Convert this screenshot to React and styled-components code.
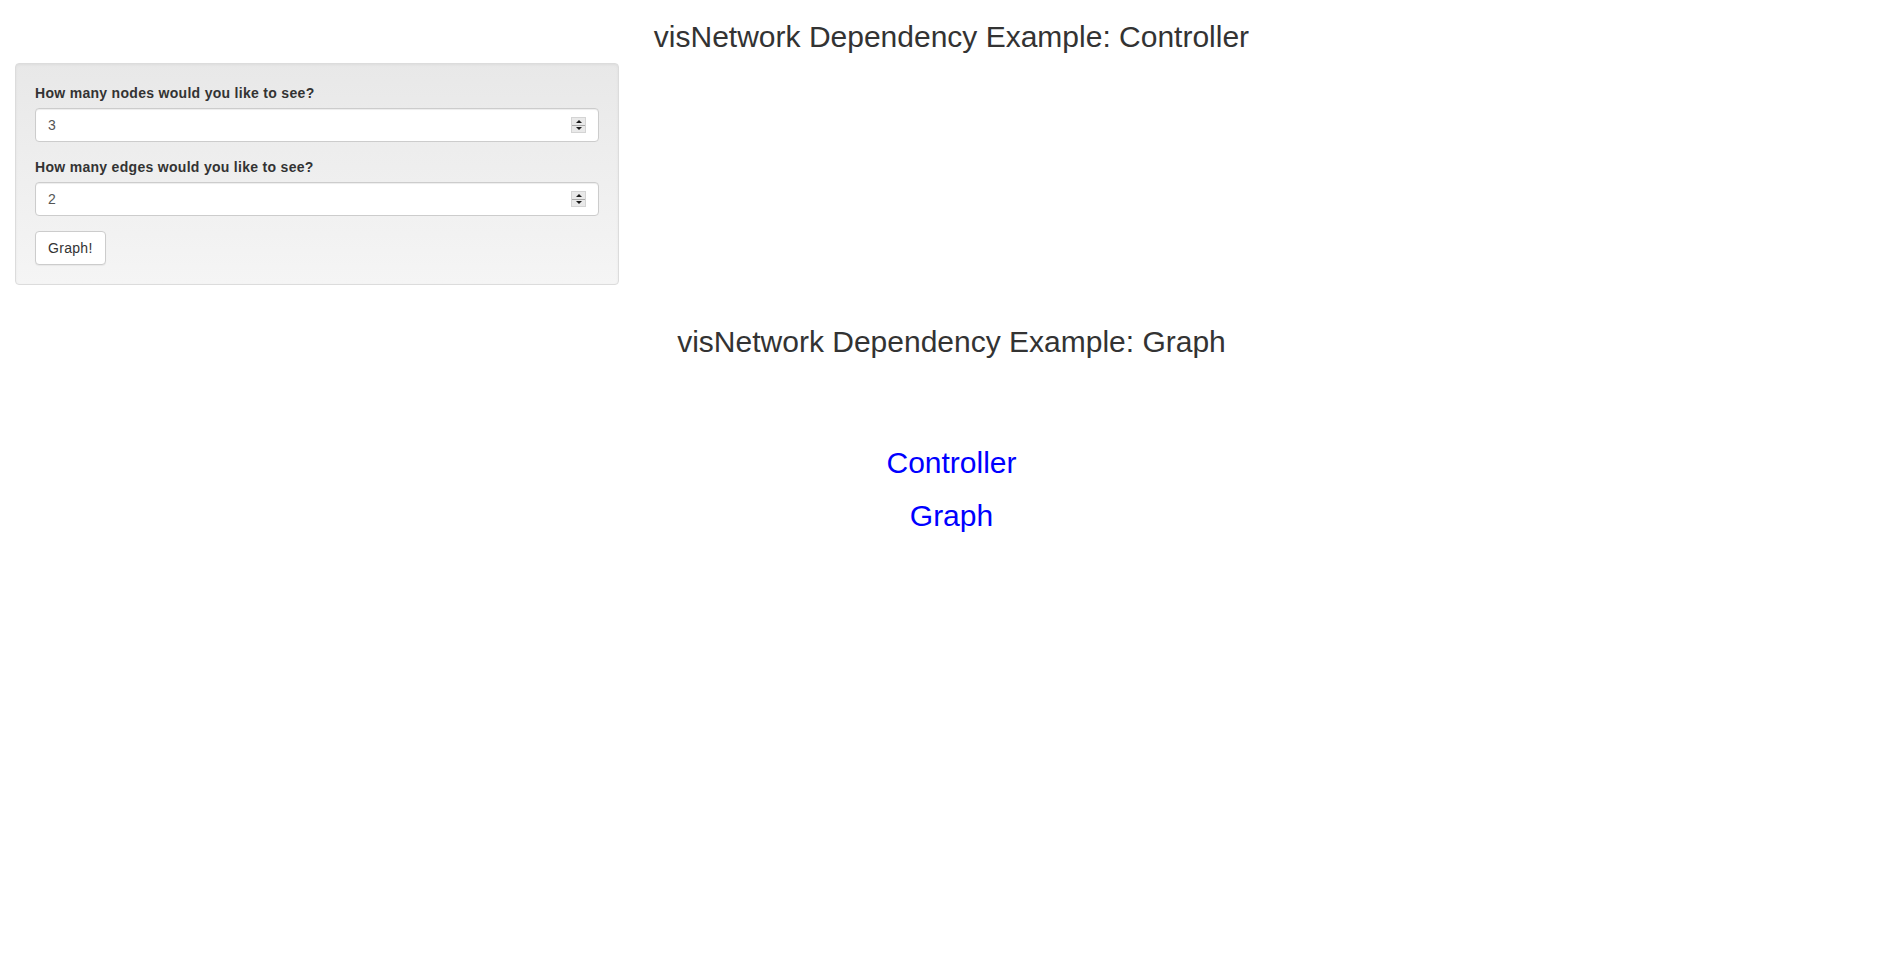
import React from "react";
import styled, { createGlobalStyle } from "styled-components";

const GlobalStyle = createGlobalStyle`
  html, body {
    margin: 0;
    padding: 0;
    background: #ffffff;
  }
  body {
    font-family: "Liberation Sans", Arial, Helvetica, sans-serif;
    font-size: 14px;
    line-height: 1.42857143;
    color: #333333;
  }
  * { box-sizing: border-box; }
`;

const Page = styled.div`
  padding: 0 15px;
`;

const Title = styled.h2`
  margin: 20px 0 10px;
  font-size: 30px;
  font-weight: 500;
  line-height: 1.1;
  text-align: center;
  color: #333333;
`;

const Sidebar = styled.div`
  display: flow-root;
  width: calc((100% + 30px) / 3 - 30px);
`;

const Well = styled.form`
  margin-bottom: 20px;
  padding: 19px;
  border: 1px solid #dcdcdc;
  border-radius: 4px;
  background: linear-gradient(to bottom, #e8e8e8 0%, #f5f5f5 100%);
  box-shadow: inset 0 1px 3px rgba(0, 0, 0, 0.05), 0 1px 0 rgba(255, 255, 255, 0.1);
`;

const FormGroup = styled.div`
  margin-bottom: 15px;
`;

const Label = styled.label`
  display: inline-block;
  max-width: 100%;
  margin-bottom: 5px;
  font-weight: 700;
  font-size: 14px;
  letter-spacing: 0.3px;
  color: #333333;
`;

const NumberBox = styled.div`
  display: flex;
  align-items: center;
  height: 34px;
  padding: 0 12px 0 12px;
  background: #ffffff;
  border: 1px solid #cccccc;
  border-radius: 4px;
  box-shadow: inset 0 1px 1px rgba(0, 0, 0, 0.075);
`;

const NumberInput = styled.input`
  flex: 1;
  min-width: 0;
  height: 20px;
  padding: 0;
  border: 0;
  outline: none;
  background: transparent;
  font-family: inherit;
  font-size: 14px;
  line-height: 20px;
  color: #555555;
`;

const Spinner = styled.div`
  display: flex;
  flex-direction: column;
  width: 15px;
  height: 16px;
  border: 1px solid #d4d4d4;
  background: #e9e9e9;
`;

const SpinHalf = styled.div`
  flex: 1;
  display: flex;
  align-items: center;
  justify-content: center;
  border-top: ${(p) => (p.$down ? "1px solid #a9a9a9" : "0")};
`;

const Arrow = styled.span`
  width: 0;
  height: 0;
  border-left: 3px solid transparent;
  border-right: 3px solid transparent;
  ${(p) =>
    p.$down
      ? "border-top: 3px solid #1a1a1a;"
      : "border-bottom: 3px solid #1a1a1a;"}
`;

const Button = styled.button`
  display: inline-block;
  height: 34px;
  padding: 6px 12px;
  font-family: inherit;
  font-size: 14px;
  line-height: 20px;
  letter-spacing: 0.3px;
  color: #333333;
  background: #ffffff;
  border: 1px solid #cccccc;
  border-radius: 4px;
  box-shadow: 0 1px 1px rgba(0, 0, 0, 0.05);
  cursor: pointer;
`;

const GraphCanvas = styled.div`
  display: flex;
  flex-direction: column;
  align-items: center;
  padding-top: 68px;
  height: 500px;
`;

const NodeLabel = styled.span`
  font-family: "Liberation Sans", Arial, sans-serif;
  font-size: 30px;
  line-height: 53px;
  color: #0000ff;
`;

function NumericField({ id, value }) {
  return (
    <NumberBox>
      <NumberInput id={id} type="text" defaultValue={value} />
      <Spinner>
        <SpinHalf>
          <Arrow />
        </SpinHalf>
        <SpinHalf $down>
          <Arrow $down />
        </SpinHalf>
      </Spinner>
    </NumberBox>
  );
}

export default function App() {
  return (
    <>
      <GlobalStyle />
      <Page>
        <Title>visNetwork Dependency Example: Controller</Title>
        <Sidebar>
          <Well onSubmit={(e) => e.preventDefault()}>
            <FormGroup>
              <Label htmlFor="nodes">How many nodes would you like to see?</Label>
              <NumericField id="nodes" value="3" />
            </FormGroup>
            <FormGroup>
              <Label htmlFor="edges">How many edges would you like to see?</Label>
              <NumericField id="edges" value="2" />
            </FormGroup>
            <Button type="button">Graph!</Button>
          </Well>
        </Sidebar>
        <Title>visNetwork Dependency Example: Graph</Title>
        <GraphCanvas>
          <NodeLabel>Controller</NodeLabel>
          <NodeLabel>Graph</NodeLabel>
        </GraphCanvas>
      </Page>
    </>
  );
}
